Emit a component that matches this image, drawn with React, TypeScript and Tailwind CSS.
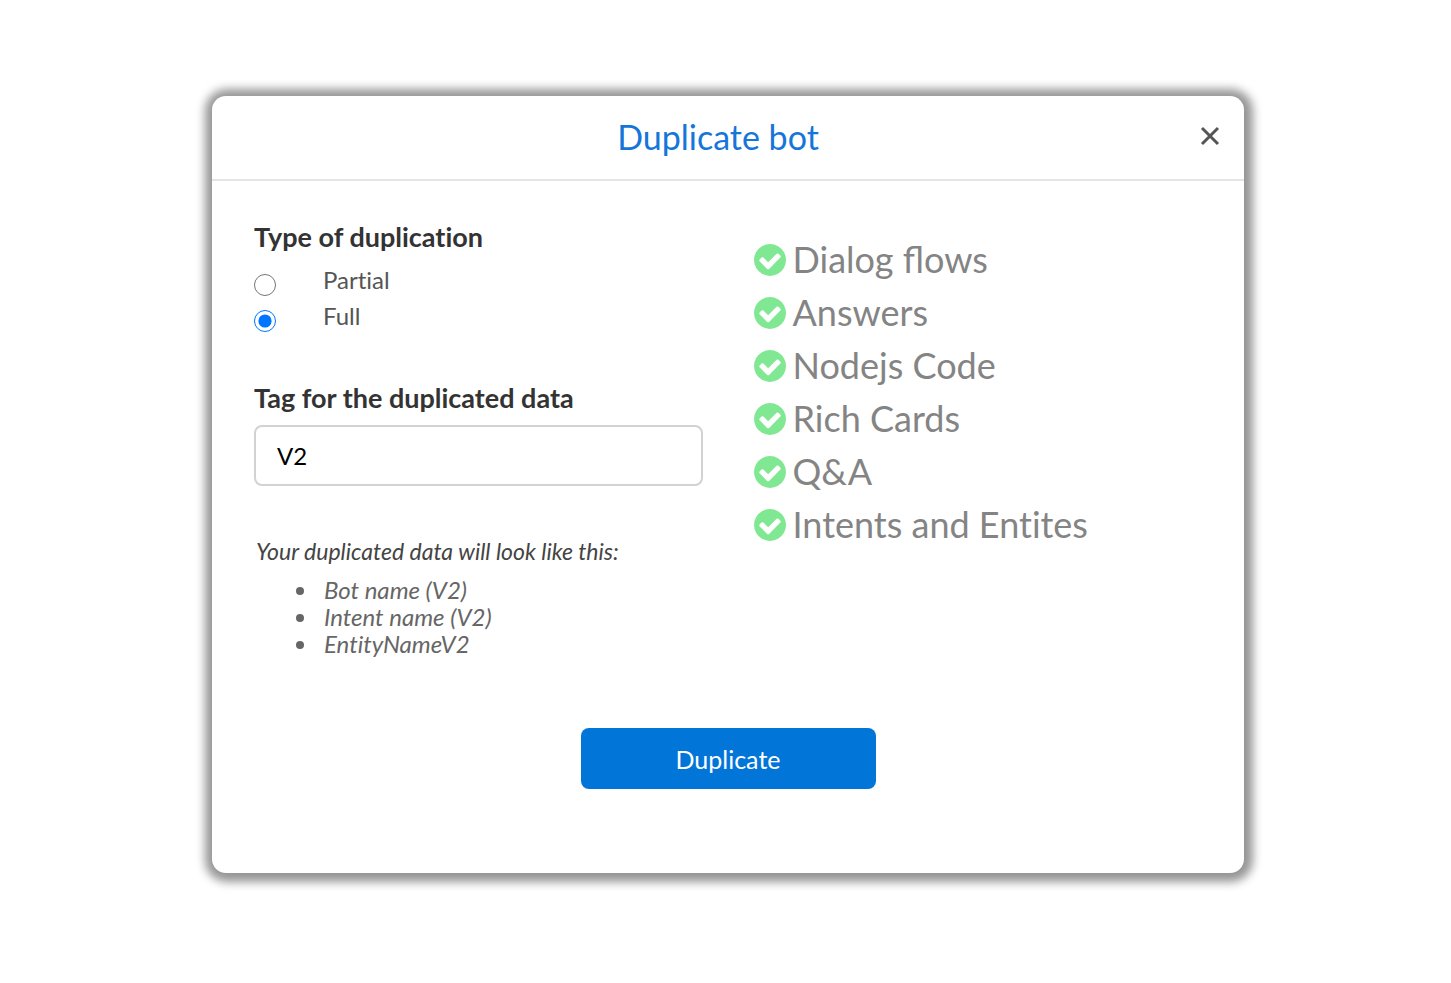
import { useState } from "react";

const TYPES = [
    { id: "partial", label: "Partial" },
    { id: "full", label: "Full" },
];

const FEATURES = [
    "Dialog flows",
    "Answers",
    "Nodejs Code",
    "Rich Cards",
    "Q&A",
    "Intents and Entites",
];

function CloseIcon() {
    return (
        <svg viewBox="0 0 20 20" className="w-5 h-5" fill="none" stroke="#555" strokeWidth="3">
            <path d="M2 2L18 18M18 2L2 18" />
        </svg>
    );
}

function CheckCircle() {
    return (
        <svg viewBox="128 128 1536 1536" className="w-8 h-8 text-[#80e892]" fill="currentColor" aria-hidden="true">
            <path d="M1412 734q0-28-18-46l-91-90q-19-19-45-19t-45 19l-408 407-226-226q-19-19-45-19t-45 19l-91 90q-18 18-18 46 0 27 18 45l362 362q19 19 45 19 27 0 46-19l543-543q18-18 18-45zm252 162q0 209-103 385.5t-279.5 279.5-385.5 103-385.5-103-279.5-279.5-103-385.5 103-385.5 279.5-279.5 385.5-103 385.5 103 279.5 279.5 103 385.5z" />
        </svg>
    );
}

export default function App() {
    const [type, setType] = useState("full");
    const [tag, setTag] = useState("V2");

    return (
        <main className="min-h-screen bg-white pl-[212px] pr-[207px] py-24 font-['Lato',sans-serif] [font-variant-ligatures:none]">
            <section
                role="dialog"
                aria-labelledby="dialog-title"
                className="bg-white rounded-[14px] shadow-[1px_1px_10px_8px_#969696]"
            >
                <header className="flex items-center h-[85px] px-6 pb-[3px] border-b-2 border-[#e5e5e5]">
                    <h1 id="dialog-title" className="flex-1 text-center text-[34px] text-[#1576d9]">
                        Duplicate bot
                    </h1>
                    <button type="button" aria-label="Close" className="cursor-pointer">
                        <CloseIcon />
                    </button>
                </header>

                <div className="grid grid-cols-2 gap-[51px] px-[42px] pt-[38px]">
                    <div>
                        <fieldset>
                            <legend className="text-[27px] leading-9 font-bold text-[#333]">
                                Type of duplication
                            </legend>
                            <div className="pt-[7px]">
                                {TYPES.map(({ id, label }) => (
                                    <div key={id} className="flex items-center h-9">
                                        <input
                                            type="radio"
                                            id={id}
                                            name="type"
                                            checked={type === id}
                                            onChange={() => setType(id)}
                                            className="w-[22px] h-[22px] mt-[10px] mr-[47px]"
                                        />
                                        <label htmlFor={id} className="text-[24px] text-[#555]">
                                            {label}
                                        </label>
                                    </div>
                                ))}
                            </div>
                        </fieldset>

                        <label
                            htmlFor="tag"
                            className="block pt-[46px] text-[27px] leading-9 font-bold text-[#333]"
                        >
                            Tag for the duplicated data
                        </label>
                        <input
                            id="tag"
                            type="text"
                            value={tag}
                            onChange={(e) => setTag(e.target.value)}
                            className="w-full h-[61px] mt-[9px] px-[21px] border-2 border-[#d2d2d2] rounded-lg text-[24px] text-black"
                        />

                        <p className="pt-[49px] pl-[2px] text-[23px] leading-8 italic text-[#444]">
                            Your duplicated data will look like this:
                        </p>
                        <ul className="pt-[9px] pl-[65px] list-disc text-[24px] leading-[27px] italic text-[#666]">
                            <li className="pl-[5px]">{`Bot name (${tag})`}</li>
                            <li className="pl-[5px]">{`Intent name (${tag})`}</li>
                            <li className="pl-[5px]">{`EntityName${tag}`}</li>
                        </ul>
                    </div>

                    <ul className="pt-[14px] text-[36px] leading-[53px] text-[#848484]">
                        {FEATURES.map((feature) => (
                            <li
                                key={feature}
                                className="flex items-center gap-[7px] first:[font-variant-ligatures:normal]"
                            >
                                <CheckCircle />
                                {feature}
                            </li>
                        ))}
                    </ul>
                </div>

                <div className="flex justify-center pt-[71px] pb-[84px]">
                    <button
                        type="button"
                        className="w-[295px] h-[61px] pt-[2px] bg-[#0275d8] rounded-lg text-[25px] text-white cursor-pointer"
                    >
                        Duplicate
                    </button>
                </div>
            </section>
        </main>
    );
}
